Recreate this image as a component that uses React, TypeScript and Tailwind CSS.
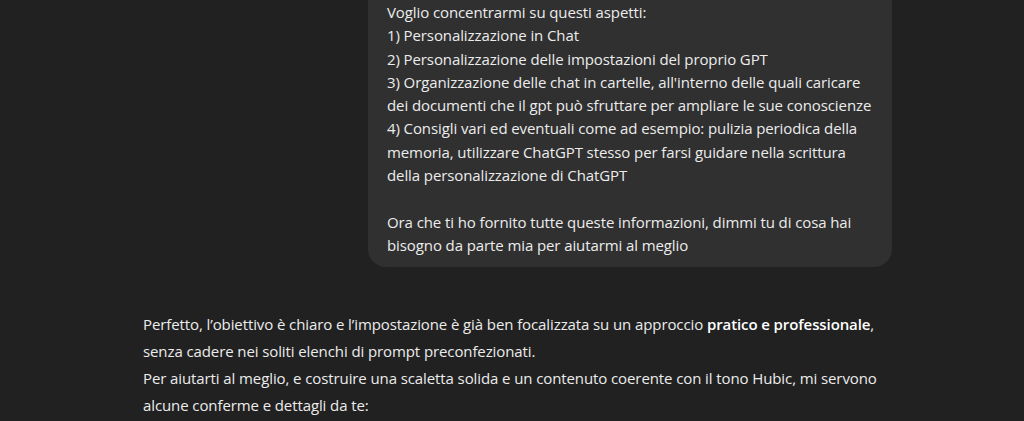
import React from "react";

const userLines = [
  "Voglio concentrarmi su questi aspetti:",
  "1) Personalizzazione in Chat",
  "2) Personalizzazione delle impostazioni del proprio GPT",
  "3) Organizzazione delle chat in cartelle, all'interno delle quali caricare",
  "dei documenti che il gpt può sfruttare per ampliare le sue conoscienze",
  "4) Consigli vari ed eventuali come ad esempio: pulizia periodica della",
  "memoria, utilizzare ChatGPT stesso per farsi guidare nella scrittura",
  "della personalizzazione di ChatGPT",
  "",
  "Ora che ti ho fornito tutte queste informazioni, dimmi tu di cosa hai",
  "bisogno da parte mia per aiutarmi al meglio",
];

export default function App() {
  return (
    <div
      className="w-[1024px] h-[421px] overflow-hidden bg-[#212121] text-[#ececec] tracking-[-0.1px]"
      style={{ fontFamily: '"Open Sans", "Noto Sans", sans-serif' }}
    >
      <div className="ml-[143px] w-[749px] flex flex-col">
        <div className="flex justify-end">
          <div className="w-[524px] bg-[#303030] rounded-b-[18px] pl-[19px] pr-[12px] pt-[1px] pb-[10px] text-[15px] leading-[23.3px]">
            {userLines.map((l, i) => (
              <div key={i} className="whitespace-nowrap h-[23.3px]">
                {l}
              </div>
            ))}
          </div>
        </div>
        <div className="mt-[44px] text-[15px] leading-[27px]">
          <div className="whitespace-nowrap">
            Perfetto, l’obiettivo è chiaro e l’impostazione è già ben focalizzata su un approccio{" "}
            <strong className="font-semibold text-white">pratico e professionale</strong>,
          </div>
          <div className="whitespace-nowrap">senza cadere nei soliti elenchi di prompt preconfezionati.</div>
          <div className="whitespace-nowrap">
            Per aiutarti al meglio, e costruire una scaletta solida e un contenuto coerente con il tono Hubic, mi servono
          </div>
          <div className="whitespace-nowrap">alcune conferme e dettagli da te:</div>
        </div>
      </div>
    </div>
  );
}
